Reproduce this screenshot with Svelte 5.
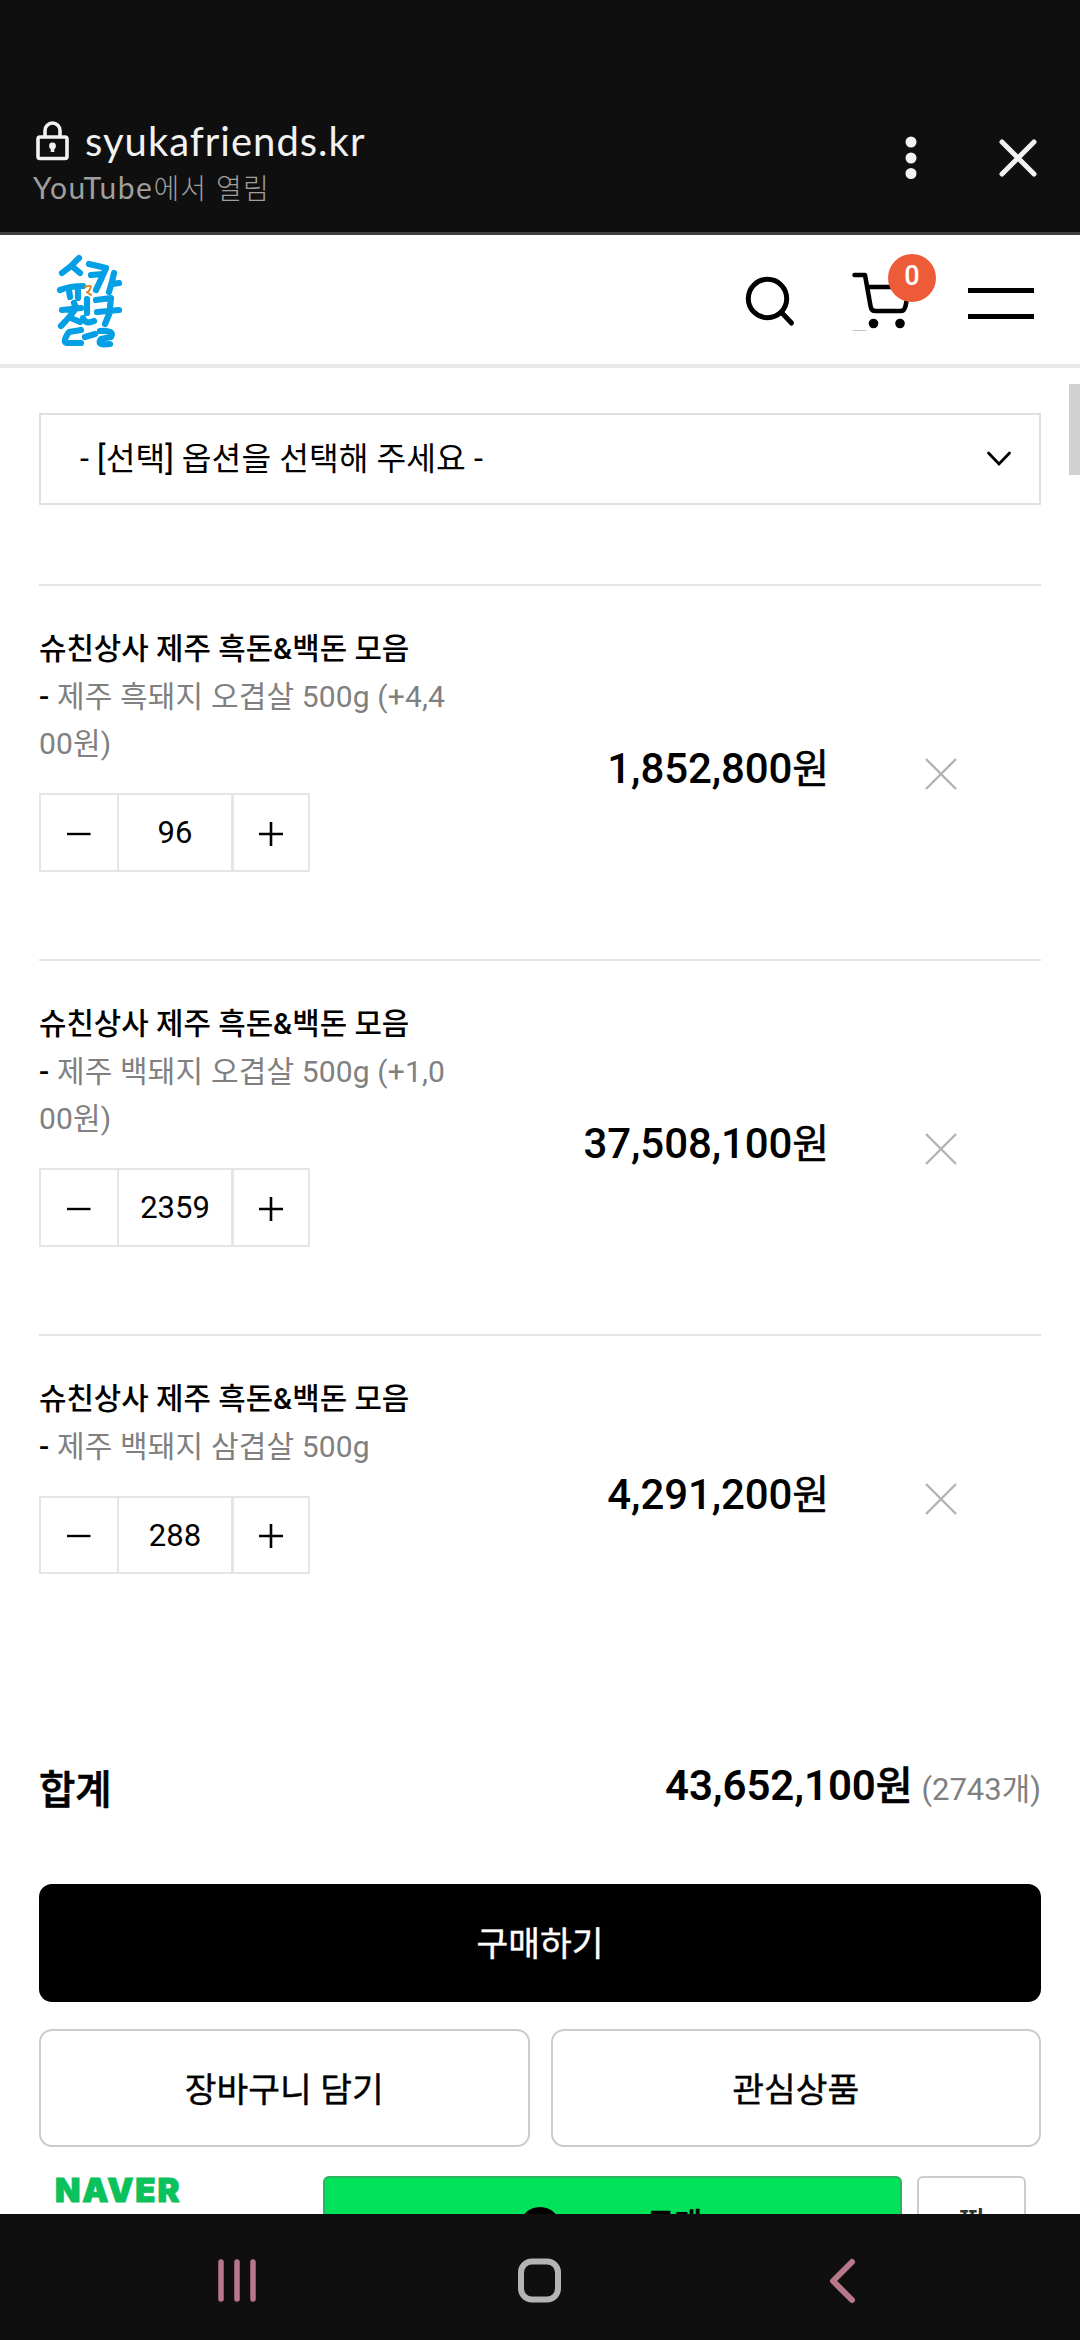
<script lang="ts">
  const items = [
    { option: '제주 흑돼지 오겹살 500g (+4,400원)', qty: 96, price: '1,852,800' },
    { option: '제주 백돼지 오겹살 500g (+1,000원)', qty: 2359, price: '37,508,100' },
    { option: '제주 백돼지 삼겹살 500g', qty: 288, price: '4,291,200' }
  ];
</script>

<div class="screen">
  <header class="browser">
    <div class="site">
      <div class="url">
        <svg class="lock" width="34" height="40" viewBox="0 0 34 40" fill="none" stroke="#f2f2f2" stroke-width="3.6">
          <rect x="2" y="16" width="29" height="21.500" rx="2" />
          <path d="M9 16V9.500a7.500 7.500 0 0 1 15 0V16" />
          <circle cx="16.500" cy="25" r="3.400" fill="#f2f2f2" stroke="none" />
          <path d="M16.500 25v6" />
        </svg>
        <span>syukafriends.kr</span>
      </div>
      <div class="opened"><span class="app">YouTube</span>에서 열림</div>
    </div>
    <svg class="dots" width="12" height="44" viewBox="0 0 12 44" fill="#f2f2f2">
      <circle cx="6" cy="6" r="5.500" /><circle cx="6" cy="22" r="5.500" /><circle cx="6" cy="37.500" r="5.500" />
    </svg>
    <svg class="close" width="40" height="40" viewBox="0 0 40 40" stroke="#f2f2f2" stroke-width="5" stroke-linecap="round">
      <path d="M4 4 36 36M36 4 4 36" />
    </svg>
  </header>

  <div class="shopbar">
    <svg class="logo" width="70" height="100" viewBox="0 0 70 100" fill="none" stroke="#049fe4" stroke-width="6.200" stroke-linecap="round" stroke-linejoin="round">
      <path d="M25 8Q17 17 8 23M19 17 26 23M6 40Q16 36 29 36M15 40l1 7M24 38v10" />
      <path d="M35 14Q44 16 52 18Q47 30 42 40M37 25 49 24M60 23Q58 33 55 42M59 34 65 33" />
      <path d="M20 53l2 5M8 60 27 58M20 61Q14 69 7 76M17 68 26 72M33 49v14M29 68Q32 75 40 71" />
      <path d="M42 50 57 48 56 57M43 62 65 60M56 62 51 74" />
      <path d="M27 80 15 82Q8 92 13 93L27 93M31 87 41 84M46 81Q61 80 57 87L47 89Q42 96 56 94" />
      <path d="M31 37q8-3 5 2t-3 3l4 3" stroke="#d18a25" stroke-width="2" />
    </svg>
    <div class="tools">
      <svg class="search" width="54" height="54" viewBox="0 0 54 54" fill="none" stroke="#000" stroke-width="5" stroke-linecap="round">
        <circle cx="24.500" cy="24.500" r="19.200" /><path d="M38.500 38.500 48.500 49" />
      </svg>
      <div class="cart">
        <svg width="66" height="62" viewBox="0 0 66 62" fill="none" stroke="#000" stroke-width="4.500" stroke-linecap="round" stroke-linejoin="round">
          <path d="M4.500 5h10.500l5.500 31q.8 5 5 5h25q4 0 5-5l4-19H18" />
          <circle cx="23.500" cy="53.500" r="4.800" fill="#000" stroke="none" /><circle cx="50" cy="53.500" r="4.800" fill="#000" stroke="none" />
          <path d="M3 60.500h13" stroke="#c4c4c4" stroke-width="1" />
        </svg>
        <span class="badge">0</span>
      </div>
      <div class="menu"><i></i><i></i></div>
    </div>
  </div>

  <main>
    <div class="thumb"></div>
    <div class="select">
      <span>- [선택] 옵션을 선택해 주세요 -</span>
      <svg width="26" height="18" viewBox="0 0 26 18" fill="none" stroke="#000" stroke-width="2.800" stroke-linecap="round">
        <path d="M2.500 3 13 14 23.500 3" />
      </svg>
    </div>

    <ul class="items">
      {#each items as item}
        <li>
          <div class="info">
            <p class="name">슈친상사 제주 흑돈&amp;백돈 모음</p>
            <p class="option"><b>-</b> {item.option}</p>
            <div class="qty">
              <span class="btn"><svg width="26" height="26" viewBox="0 0 26 26" stroke="#000" stroke-width="2.400"><path d="M1 13h23.500" /></svg></span>
              <span class="num">{item.qty}</span>
              <span class="btn"><svg width="26" height="26" viewBox="0 0 26 26" stroke="#000" stroke-width="2.600"><path d="M1 13h24M13 1v24" /></svg></span>
            </div>
          </div>
          <strong class="price">{item.price}<span class="won">원</span></strong>
          <svg class="remove" width="32" height="32" viewBox="0 0 32 32" stroke="#b3b3b3" stroke-width="2.400"><path d="M1 1 31 31M31 1 1 31" /></svg>
        </li>
      {/each}
    </ul>

    <div class="total">
      <span class="label">합계</span>
      <span class="sum"><strong>43,652,100<span class="won">원</span></strong><small>(2743개)</small></span>
    </div>

    <div class="buy">구매하기</div>
    <div class="pair">
      <div class="ghost">장바구니 담기</div>
      <div class="ghost">관심상품</div>
    </div>

    <div class="naver">
      <span class="brand">NAVER</span>
      <div class="pay"><span class="coin"></span><span class="n">Pay</span><span>구매</span></div>
      <div class="wish">찜</div>
    </div>
  </main>

  <nav>
    <svg width="44" height="48" viewBox="0 0 44 48" stroke="#b87889" stroke-width="5.500" stroke-linecap="round"><path d="M6 5v37M22 5v37M38 5v37" /></svg>
    <svg width="48" height="48" viewBox="0 0 48 48" fill="none" stroke="#b4b4b4" stroke-width="6"><rect x="5" y="4.500" width="37" height="38" rx="11" /></svg>
    <svg width="34" height="48" viewBox="0 0 34 48" fill="none" stroke="#b87889" stroke-width="6" stroke-linecap="round" stroke-linejoin="round"><path d="M25 5 6 24 25 43" /></svg>
  </nav>
</div>

<style>
  :global(body) { background: #fff; }
  .screen {
    width: 1080px; height: 2340px; display: flex; flex-direction: column; overflow: hidden;
    background: #fff; color: #000; font-family: Roboto, "Noto Sans CJK KR", sans-serif;
  }
  .screen :global(*) { box-sizing: border-box; }
  svg { display: block; flex: none; }
  p, ul { margin: 0; padding: 0; list-style: none; }

  .browser {
    height: 235px; flex: none; background: #0f0f0f; border-bottom: 3px solid #3f3f3f;
    display: flex; align-items: flex-start; padding: 116px 42px 0 33px; font-family: Lato, "Noto Sans CJK KR", sans-serif;
  }
  .site { flex: 1; }
  .url { display: flex; align-items: flex-start; gap: 15px; padding-left: 3px; font-size: 40px; line-height: 51px; letter-spacing: 1px; color: #f2f2f2; }
  .lock { margin-top: 5px; }
  .opened { font-size: 28px; line-height: 36px; margin-top: 2px; color: #9f9f9f; font-weight: 300; letter-spacing: 1.200px; }
  .app { font-size: 30px; font-weight: 400; letter-spacing: 1.500px; }
  .dots { margin: 20px 81px 0 0; }
  .close { margin-top: 22px; }

  .shopbar {
    height: 133px; flex: none; border-bottom: 4px solid #e9e9e9;
    display: flex; justify-content: space-between; align-items: flex-start; padding: 15px 46px 0 54px;
  }
  .tools { display: flex; align-items: flex-start; }
  .search { margin-top: 24px; }
  .cart { position: relative; margin: 20px 0 0 53px; }
  .badge {
    position: absolute; left: 38px; top: -16px; width: 48px; height: 48px; border-radius: 50%;
    background: #ee5b38; color: #fff; font-size: 27px; font-weight: 500; line-height: 44px; text-align: center;
  }
  .menu { width: 66px; margin: 38px 0 0 52px; display: flex; flex-direction: column; gap: 21px; }
  .menu i { height: 5px; background: #000; }

  main { flex: 1; min-height: 0; overflow: hidden; padding: 45px 39px 0; position: relative; }
  .thumb { position: absolute; right: 0; top: 16px; width: 11px; height: 91px; background: #d1d1d1; }
  .select {
    height: 92px; border: 2px solid #e0e0e0; padding: 0 27px 0 39px; font-size: 32.300px; line-height: 86px; letter-spacing: .05px;
    display: flex; align-items: center; justify-content: space-between;
  }
  .items { margin-top: 79px; }
  .items li {
    border-top: 2px solid #e5e5e5; padding-right: 84px; display: grid;
    grid-template-columns: 411px 1fr 32px; align-items: center;
  }
  .info { padding: 39px 0 87px; }
  .items p { font-size: 30px; line-height: 47.500px; }
  .items .name { font-weight: 500; font-size: 29.800px; }
  .option { color: #808080; word-break: break-all; letter-spacing: .15px; }
  .option b { color: #000; font-weight: 500; }
  .qty { width: 271px; height: 79px; margin-top: 25.500px; border: 2px solid #e5e5e5; display: flex; }
  .items li:last-child .qty { height: 78px; }
  .btn { width: 76px; display: grid; place-items: center; padding-top: 2px; }
  .btn:last-child { width: 74px; }
  .num { width: 117px; border: solid #e5e5e5; border-width: 0 3px 0 2px; text-align: center; font-size: 31px; line-height: 75px; }
  .price { font-size: 42px; font-weight: 500; text-align: right; padding-right: 96px; line-height: 50px; margin-top: -6px; letter-spacing: -.1px; }
  .won { font-weight: 400; font-size: 40px; -webkit-text-stroke: .6px #000; }
  .remove { margin-top: 2px; }

  .total { display: flex; justify-content: space-between; align-items: baseline; margin-top: 95.500px; height: 128px; line-height: 60px; }
  .label { font-size: 39.500px; font-weight: 500; -webkit-text-stroke: .7px #000; transform: translateY(4px); }
  .sum strong { font-size: 42px; font-weight: 600; letter-spacing: -.1px; }
  .sum .won { font-weight: 500; }
  .sum small { font-size: 31px; color: #808080; margin-left: 9px; }
  .buy { height: 118px; border-radius: 13px; background: #000; color: #fff; font-size: 34.500px; -webkit-text-stroke: .4px #fff; line-height: 121px; text-align: center; }
  .pair { display: grid; grid-template-columns: 1fr 1fr; gap: 21px; margin-top: 27px; }
  .ghost { height: 118px; border: 2px solid #ccc; border-radius: 13px; font-size: 34.500px; -webkit-text-stroke: .4px #000; line-height: 118px; text-align: center; }

  .naver { display: flex; align-items: flex-start; margin-top: 29px; padding: 0 15px; }
  .brand { width: 269px; padding-left: 1px; font: 900 33px/29px Inter, sans-serif; color: #0bc15c; letter-spacing: 1.800px; -webkit-text-stroke: 1px #0bc15c; }
  .pay {
    width: 579px; height: 90px; border: 2px solid #2bb35f; border-radius: 6px; background: #00e25a;
    display: flex; align-items: flex-start; padding: 29px 0 0 194px; font-size: 30px; font-weight: 700; line-height: 34px;
  }
  .coin { width: 42px; height: 42px; border-radius: 50%; background: #000; }
  .n { width: 78px; padding: 2px 0 0 12px; margin-right: 8px; }
  .wish { width: 109px; height: 90px; margin-left: 15px; border: 2px solid #ccc; border-radius: 6px; text-align: center; font-size: 29px; font-weight: 500; color: #333; line-height: 90px; }

  nav { height: 126px; flex: none; background: #0f0f0f; display: grid; grid-template-columns: 301px 311px 1fr; padding: 43px 0 0 215px; }
</style>
